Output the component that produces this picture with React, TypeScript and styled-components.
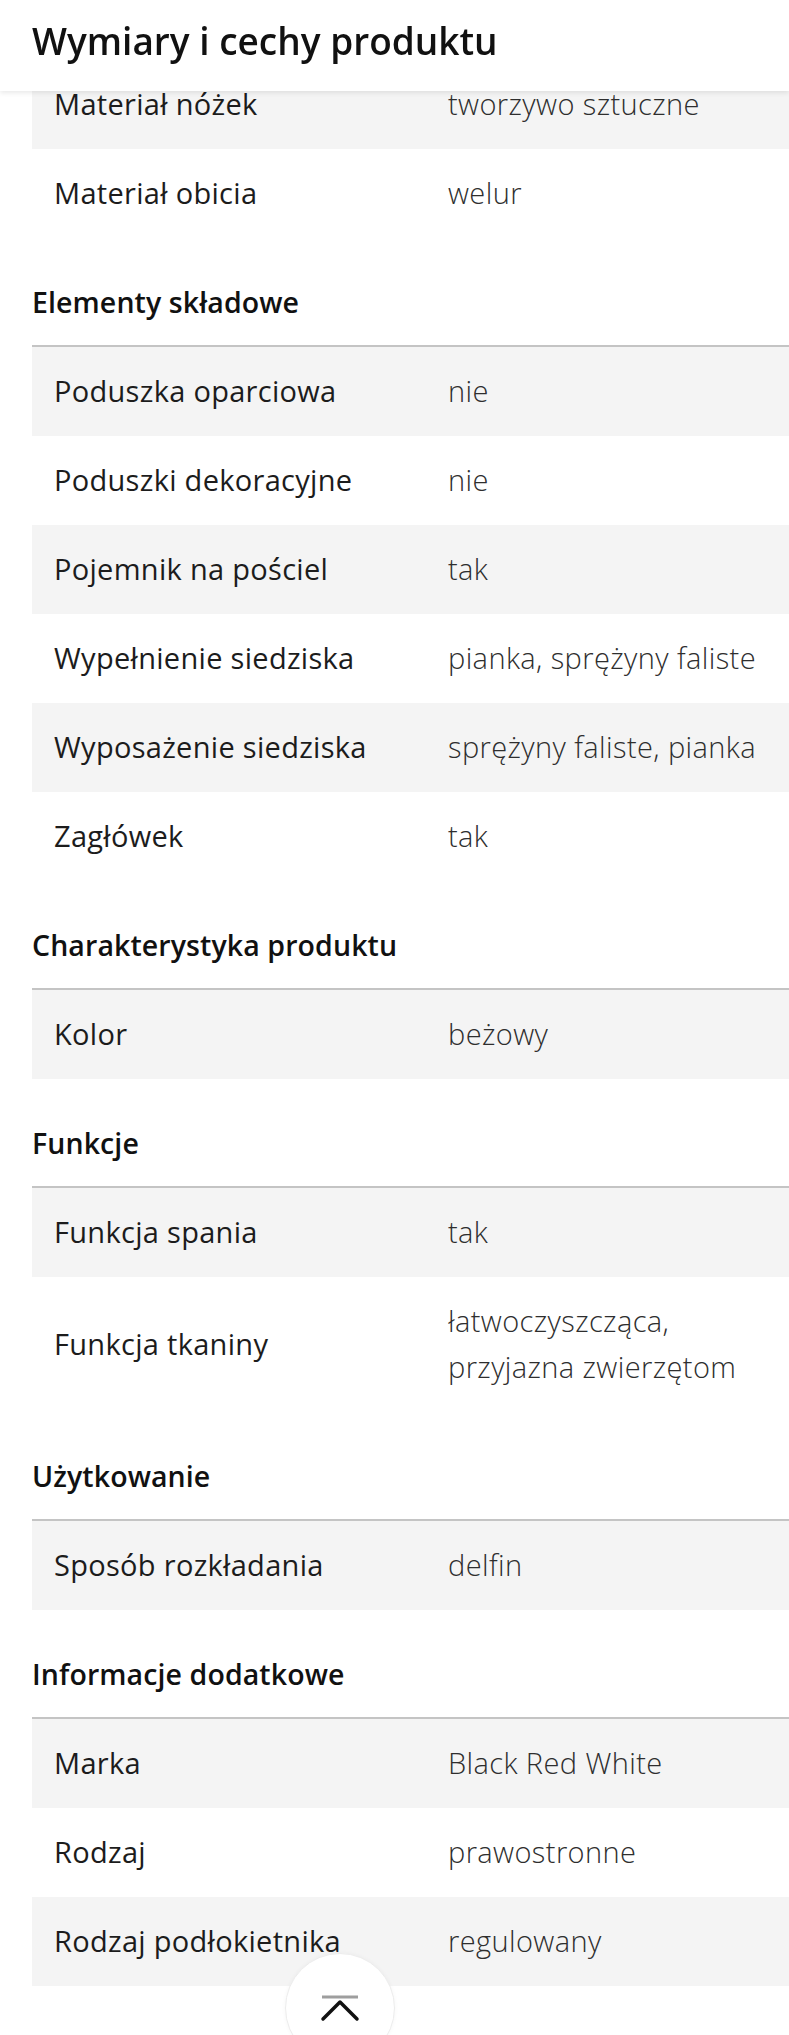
import React from "react";
import styled, { createGlobalStyle } from "styled-components";

const GlobalStyle = createGlobalStyle`
  html, body {
    margin: 0;
    padding: 0;
    background: #ffffff;
  }
  body {
    font-family: "Open Sans", "Noto Sans", "DejaVu Sans", sans-serif;
    color: #1a1a1a;
    -webkit-font-smoothing: antialiased;
  }
`;

const Page = styled.div`
  width: 789px;
  min-height: 2035px;
  background: #fff;
`;

const Header = styled.header`
  position: fixed;
  top: 0;
  left: 0;
  right: 0;
  height: 91px;
  background: #fff;
  box-shadow: 0 2px 5px rgba(0, 0, 0, 0.09);
  display: flex;
  align-items: center;
  padding: 0 0 10px 32px;
  box-sizing: border-box;
  z-index: 10;
`;

const Title = styled.h1`
  margin: 0;
  font-size: 37px;
  font-weight: 600;
  color: #111;
  letter-spacing: 0px;
`;

const Content = styled.main`
  padding-top: 59.5px;
  margin-left: 32px;
`;

const Section = styled.section`
  display: flex;
  flex-direction: column;
`;

const SectionTitle = styled.h2`
  margin: 0;
  padding: 41px 0 20px 0;
  font-size: 28.5px;
  line-height: 46px;
  font-weight: 600;
  color: #111;
  letter-spacing: 0.1px;
  border-bottom: 2px solid #c4c4c4;
`;

const Row = styled.div<{ $shaded: boolean }>`
  display: grid;
  grid-template-columns: 394px 1fr;
  align-items: center;
  padding: 21.5px 0 21.5px 22px;
  background: ${(p) => (p.$shaded ? "#f4f4f4" : "#ffffff")};
`;

const Label = styled.div`
  font-size: 29px;
  line-height: 46px;
  font-weight: 400;
  letter-spacing: 0.3px;
  color: #1c1c1c;
  white-space: nowrap;
`;

const Value = styled.div`
  font-size: 29px;
  line-height: 46px;
  font-weight: 300;
  letter-spacing: 0.4px;
  color: #2e2e2e;
  white-space: nowrap;
`;

const ScrollTop = styled.button`
  position: fixed;
  left: 285px;
  top: 1953px;
  width: 110px;
  height: 110px;
  border-radius: 50%;
  background: #fff;
  border: 1.5px solid #ececec;
  box-shadow: 0 0 4px rgba(0, 0, 0, 0.04);
  padding: 0;
  display: flex;
  align-items: flex-start;
  justify-content: center;
  z-index: 20;
`;

const Icon = styled.svg`
  margin-top: 40px;
  width: 40px;
  height: 30px;
`;

type Item = [string, string[]];
type Group = { title?: string; items: Item[] };

const groups: Group[] = [
  {
    items: [
      ["Materiał nóżek", ["tworzywo sztuczne"]],
      ["Materiał obicia", ["welur"]],
    ],
  },
  {
    title: "Elementy składowe",
    items: [
      ["Poduszka oparciowa", ["nie"]],
      ["Poduszki dekoracyjne", ["nie"]],
      ["Pojemnik na pościel", ["tak"]],
      ["Wypełnienie siedziska", ["pianka, sprężyny faliste"]],
      ["Wyposażenie siedziska", ["sprężyny faliste, pianka"]],
      ["Zagłówek", ["tak"]],
    ],
  },
  {
    title: "Charakterystyka produktu",
    items: [["Kolor", ["beżowy"]]],
  },
  {
    title: "Funkcje",
    items: [
      ["Funkcja spania", ["tak"]],
      ["Funkcja tkaniny", ["łatwoczyszcząca,", "przyjazna zwierzętom"]],
    ],
  },
  {
    title: "Użytkowanie",
    items: [["Sposób rozkładania", ["delfin"]]],
  },
  {
    title: "Informacje dodatkowe",
    items: [
      ["Marka", ["Black Red White"]],
      ["Rodzaj", ["prawostronne"]],
      ["Rodzaj podłokietnika", ["regulowany"]],
    ],
  },
];

export default function App() {
  return (
    <Page>
      <GlobalStyle />
      <Header>
        <Title>Wymiary i cechy produktu</Title>
      </Header>
      <Content>
        {groups.map((g, gi) => (
          <Section key={gi}>
            {g.title && <SectionTitle>{g.title}</SectionTitle>}
            {g.items.map(([label, values], i) => (
              <Row key={label} $shaded={i % 2 === 0}>
                <Label>{label}</Label>
                <Value>
                  {values.map((v, vi) => (
                    <div key={vi}>{v}</div>
                  ))}
                </Value>
              </Row>
            ))}
          </Section>
        ))}
      </Content>
      <ScrollTop aria-label="Przewiń do góry">
        <Icon viewBox="0 0 40 30">
          <line x1="2" y1="3" x2="38" y2="3" stroke="#9e9e9e" strokeWidth="3" />
          <polyline
            points="3,25 20,8 37,25"
            fill="none"
            stroke="#111"
            strokeWidth="3.5"
            strokeLinecap="round"
            strokeLinejoin="round"
          />
        </Icon>
      </ScrollTop>
    </Page>
  );
}
